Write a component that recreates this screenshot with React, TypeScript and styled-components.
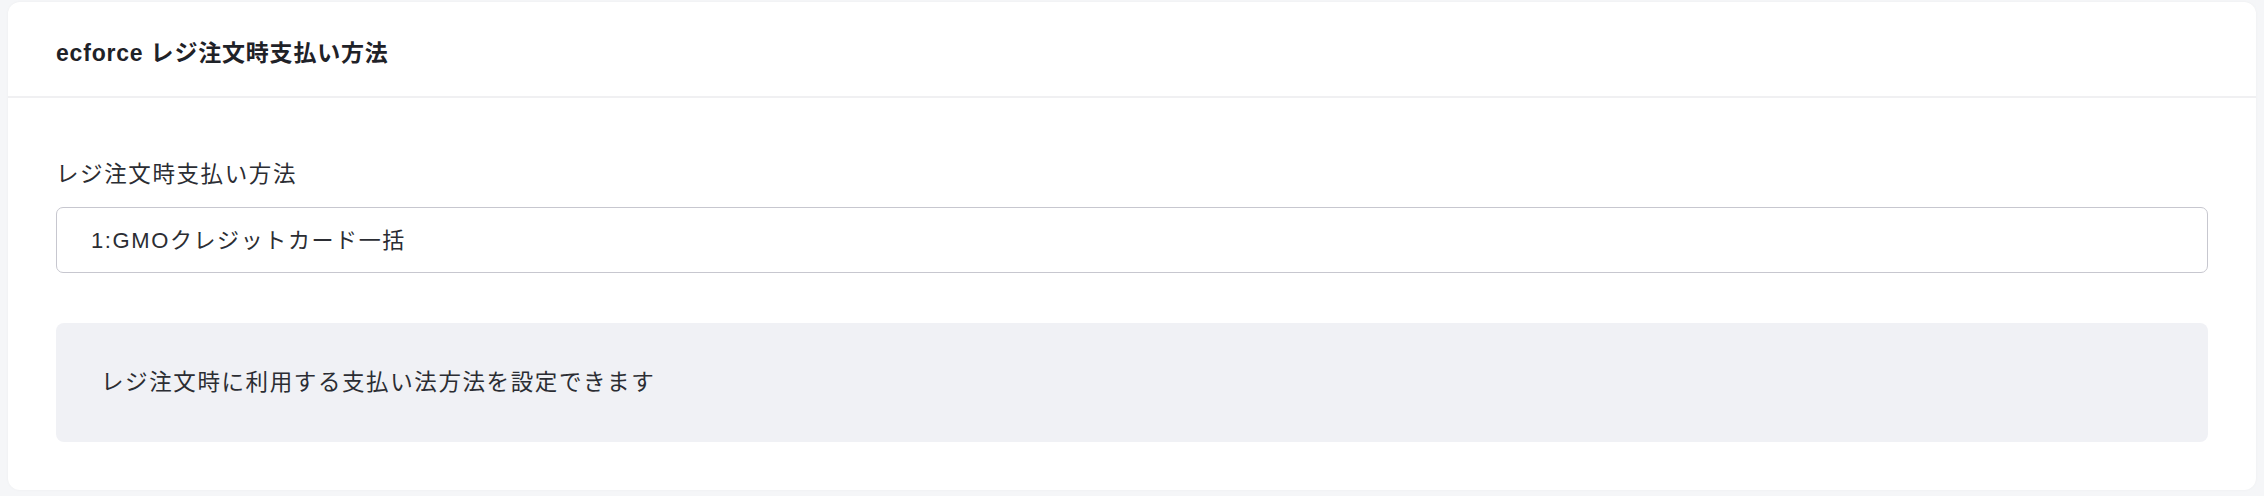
import React from 'react'
import styled, { createGlobalStyle } from 'styled-components'

const GlobalStyle = createGlobalStyle`
  html, body {
    margin: 0;
    padding: 0;
    background: #f5f6f8;
  }
  body {
    font-family: "Liberation Sans", "Noto Sans CJK JP", sans-serif;
    color: #2b2d33;
  }
`

const paymentOptions = ['1:GMOクレジットカード一括']

export default function App() {
  return (
    <>
      <GlobalStyle />
      <Page>
        <Card>
          <CardHeader>
            <Title>ecforce レジ注文時支払い方法</Title>
          </CardHeader>
          <CardBody>
            <Label htmlFor="payment">レジ注文時支払い方法</Label>
            <Select id="payment" defaultValue={paymentOptions[0]}>
              {paymentOptions.map(o => (
                <option key={o}>{o}</option>
              ))}
            </Select>
            <InfoBox>レジ注文時に利用する支払い法方法を設定できます</InfoBox>
          </CardBody>
        </Card>
      </Page>
    </>
  )
}

const Page = styled.div`
  padding: 2px 8px 6px;
`

const Card = styled.section`
  display: flex;
  flex-direction: column;
  background: #fff;
  border-radius: 12px;
  box-shadow: 0 0 3px rgba(0, 0, 0, 0.04);
  height: 488px;
  box-sizing: border-box;
`

const CardHeader = styled.header`
  display: flex;
  align-items: center;
  height: 96px;
  padding: 4px 48px 0;
  box-sizing: border-box;
  border-bottom: 2px solid #f0f0f2;
`

const Title = styled.h2`
  margin: 0;
  font-size: 23px;
  font-weight: 700;
  color: #1f2228;
  letter-spacing: 0.8px;
`

const CardBody = styled.div`
  display: flex;
  flex-direction: column;
  padding: 62px 48px 46px;
`

const Label = styled.label`
  font-size: 22.5px;
  line-height: 30px;
  letter-spacing: 1.6px;
  color: #2b2d33;
  margin-bottom: 17px;
`

const Select = styled.select`
  appearance: none;
  height: 66px;
  padding: 0 34px;
  font-family: "Liberation Sans", "Noto Sans CJK JP", sans-serif;
  font-size: 22px;
  letter-spacing: 1.6px;
  color: #2b2d33;
  background: #fff;
  border: 1.5px solid #c7c7cf;
  border-radius: 7px;
  box-sizing: border-box;
  outline: none;
`

const InfoBox = styled.div`
  margin-top: 50px;
  padding: 45px 45px 44px;
  background: #f0f1f5;
  border-radius: 8px;
  font-size: 22.5px;
  line-height: 30px;
  letter-spacing: 1.6px;
  color: #2b2d33;
`
